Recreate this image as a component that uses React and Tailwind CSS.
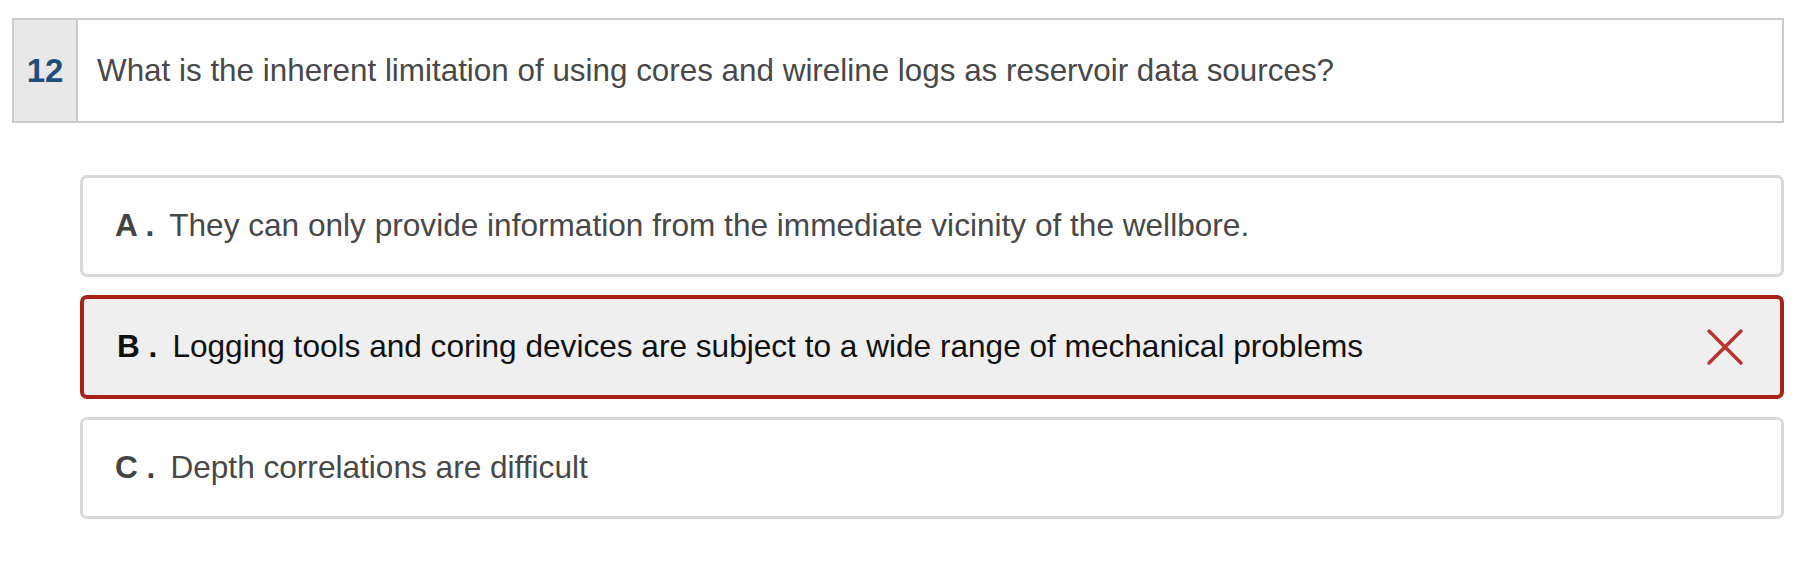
import React from 'react';

const options = [
  { key: 'A', text: 'They can only provide information from the immediate vicinity of the wellbore.' },
  { key: 'B', text: 'Logging tools and coring devices are subject to a wide range of mechanical problems', wrong: true },
  { key: 'C', text: 'Depth correlations are difficult' },
];

const WrongMark = () => (
  <svg width="38" height="38" viewBox="0 0 38 38" className="shrink-0">
    <path d="M3 3 L35 35 M35 3 L3 35" stroke="#b8342c" strokeWidth="3.5" strokeLinecap="round" fill="none" />
  </svg>
);

export default function App() {
  return (
    <div className="min-h-[568px] bg-white pt-[18px] pl-[12px] font-['Liberation_Sans',Arial,sans-serif]">
      {/* Question */}
      <div className="flex w-[1772px] h-[105px] border-2 border-[#cccccc]">
        <div className="w-[64px] bg-[#e8e8e8] border-r-2 border-[#cccccc] flex items-center justify-center">
          <span className="text-[33px] font-bold text-[#1f4e7e]">12</span>
        </div>
        <div className="flex items-center pl-[19px] text-[31.4px] text-[#484848]">
          What is the inherent limitation of using cores and wireline logs as reservoir data sources?
        </div>
      </div>

      {/* Options */}
      <div className="ml-[68px] mt-[52px] w-[1704px] flex flex-col gap-[18px]">
        {options.map((opt) => (
          <div
            key={opt.key}
            className={
              opt.wrong
                ? 'flex items-center h-[104px] rounded-[7px] border-[4px] border-[#a82218] bg-[#efefef] pl-[33px] pr-[36px]'
                : 'flex items-center h-[102px] rounded-[7px] border-[3px] border-[#d8d8d8] bg-white pl-[32px] pr-[36px]'
            }
          >
            <span className={opt.wrong ? 'text-[31.6px] font-bold text-[#111111] mr-[15px]' : 'text-[31.6px] font-bold text-[#444444] mr-[15px]'}>
              {opt.key} .
            </span>
            <span className={opt.wrong ? 'flex-1 text-[31.6px] text-[#111111]' : 'flex-1 text-[31.6px] text-[#484848]'}>
              {opt.text}
            </span>
            {opt.wrong && <WrongMark />}
          </div>
        ))}
      </div>
    </div>
  );
}
